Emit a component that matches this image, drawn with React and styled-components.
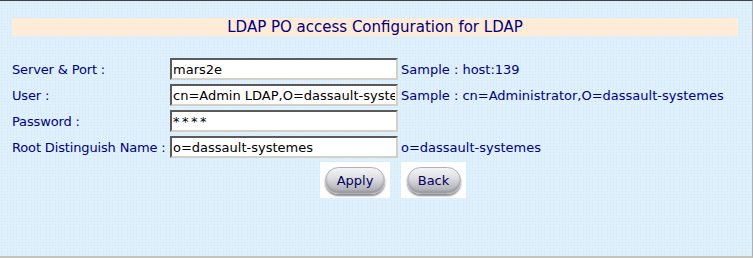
import React from "react";
import styled, { createGlobalStyle } from "styled-components";

const Global = createGlobalStyle`
  html, body {
    margin: 0;
    padding: 0;
    background: #def0fc;
  }
  body {
    font-family: "DejaVu Sans", Verdana, sans-serif;
  }
`;

const rows = [
  { label: "Server & Port :", value: "mars2e", sample: "Sample : host:139" },
  { label: "User :", value: "cn=Admin LDAP,O=dassault-systemes", sample: "Sample : cn=Administrator,O=dassault-systemes" },
  { label: "Password :", value: "****", sample: "", password: true },
  { label: "Root Distinguish Name :", value: "o=dassault-systemes", sample: "o=dassault-systemes" },
];

function App() {
  return (
    <>
      <Global />
      <Frame>
        <Title>LDAP PO access Configuration for LDAP</Title>
        <Form>
          {rows.map((r) => (
            <React.Fragment key={r.label}>
              <Label>{r.label}</Label>
              <Input type="text" defaultValue={r.value} $spaced={r.password} readOnly />
              <Sample>{r.sample}</Sample>
            </React.Fragment>
          ))}
          <ButtonCell $align="end">
            <ButtonBox $w={70}>
              <Pill $w={60}>Apply</Pill>
            </ButtonBox>
          </ButtonCell>
          <ButtonCell $align="start">
            <ButtonBox $w={65}>
              <Pill $w={54}>Back</Pill>
            </ButtonBox>
          </ButtonCell>
        </Form>
      </Frame>
    </>
  );
}

export default App;

const Frame = styled.div`
  box-sizing: border-box;
  width: 753px;
  height: 258px;
  border-top: 1px solid #404040;
  border-right: 1px solid #b0b0b0;
  border-bottom: 2px solid #c4c4bc;
  padding: 17px 14px 0 12px;
  background-color: #def0fc;
  background-image: radial-gradient(#d2e6f6 0.6px, transparent 0.8px);
  background-size: 3px 3px;
`;

const Title = styled.div`
  height: 18px;
  width: 726px;
  background: #feecd8;
  color: #000080;
  font-size: 15px;
  line-height: 18px;
  text-align: center;
`;

const Form = styled.div`
  display: grid;
  grid-template-columns: 158px 231px 1fr;
  grid-auto-rows: 22px;
  row-gap: 4px;
  margin-top: 22px;
  align-items: center;
`;

const Label = styled.div`
  color: #000080;
  font-size: 13px;
  letter-spacing: -0.15px;
  white-space: nowrap;
`;

const Sample = styled.div`
  color: #000080;
  font-size: 13px;
  white-space: nowrap;
`;

const Input = styled.input`
  box-sizing: border-box;
  width: 228px;
  height: 22px;
  margin: 0;
  padding: 0 1px;
  border: 2px solid;
  border-color: #5a5a5a #d4d0c8 #d4d0c8 #5a5a5a;
  background: #fff;
  color: #000;
  font-family: "DejaVu Sans", Verdana, sans-serif;
  font-size: 13px;
  letter-spacing: ${(p) => (p.$spaced ? "2.5px" : "0")};
  outline: none;
`;

const ButtonCell = styled.div`
  grid-column: ${(p) => (p.$align === "end" ? 2 : 3)};
  grid-row: 5;
  display: flex;
  justify-content: ${(p) => (p.$align === "end" ? "flex-end" : "flex-start")};
  padding-right: ${(p) => (p.$align === "end" ? "11px" : "0")};
  align-self: start;
  height: 36px;
`;

const ButtonBox = styled.div`
  width: ${(p) => p.$w}px;
  height: 36px;
  background: #fff;
  display: flex;
  align-items: center;
  justify-content: center;
`;

const Pill = styled.div`
  box-sizing: border-box;
  width: ${(p) => p.$w}px;
  height: 27px;
  border-radius: 14px;
  background: linear-gradient(#f4f4f6 0%, #e2e2e6 35%, #bdbdc4 75%, #a8a8b0 100%);
  box-shadow: 0 2px 2px #8a8a92, inset 0 -2px 2px #9a9aa2;
  border: 1px solid #b0b0b8;
  color: #000060;
  font-size: 13px;
  line-height: 25px;
  text-align: center;
`;
